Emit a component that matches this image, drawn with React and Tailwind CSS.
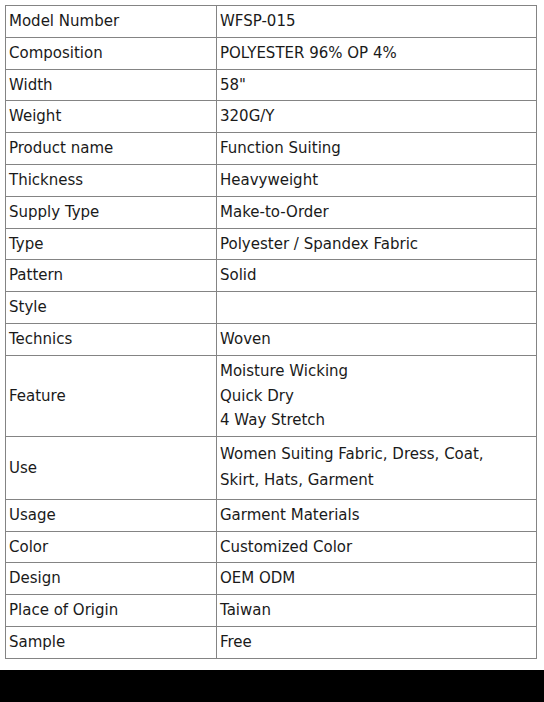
import React from "react";

const rows = [
  ["Model Number", ["WFSP-015"]],
  ["Composition", ["POLYESTER 96% OP 4%"]],
  ["Width", ['58"']],
  ["Weight", ["320G/Y"]],
  ["Product name", ["Function Suiting"]],
  ["Thickness", ["Heavyweight"]],
  ["Supply Type", ["Make-to-Order"]],
  ["Type", ["Polyester / Spandex Fabric"]],
  ["Pattern", ["Solid"]],
  ["Style", [""]],
  ["Technics", ["Woven"]],
  ["Feature", ["Moisture Wicking", "Quick Dry", "4 Way Stretch"]],
  ["Use", ["Women Suiting Fabric, Dress, Coat,", "Skirt, Hats, Garment"]],
  ["Usage", ["Garment Materials"]],
  ["Color", ["Customized Color"]],
  ["Design", ["OEM ODM"]],
  ["Place of Origin", ["Taiwan"]],
  ["Sample", ["Free"]],
];

const App = () => {
  return (
    <div className="w-[544px] min-h-[702px] bg-white flex flex-col font-['DejaVu_Sans',Verdana,sans-serif] text-[15px] text-[#1a1a1a]">
      <div className="pt-[5px] pl-[5px]">
        <table className="w-[532px] border-collapse border border-[#848484]">
          <tbody>
            {rows.map(([label, value]) => (
              <tr key={label}>
                <td className="w-[211px] border border-[#848484] pl-[3px] py-[3px] leading-[24.8px] align-middle">
                  {label}
                </td>
                <td
                  className={
                    label === "Use"
                      ? "border border-[#848484] pl-[3px] py-[5px] leading-[24.8px] align-middle"
                      : "border border-[#848484] pl-[3px] py-[3px] leading-[24.8px] align-top"
                  }
                >
                  {value.map((line, i) => (
                    <div key={i} className={label === "Use" ? "h-[25.8px] leading-[25.8px]" : "h-[24.8px]"}>{line}</div>
                  ))}
                </td>
              </tr>
            ))}
          </tbody>
        </table>
      </div>
      <div className="mt-[11px] h-[33px] bg-black"></div>
    </div>
  );
};

export default App;
